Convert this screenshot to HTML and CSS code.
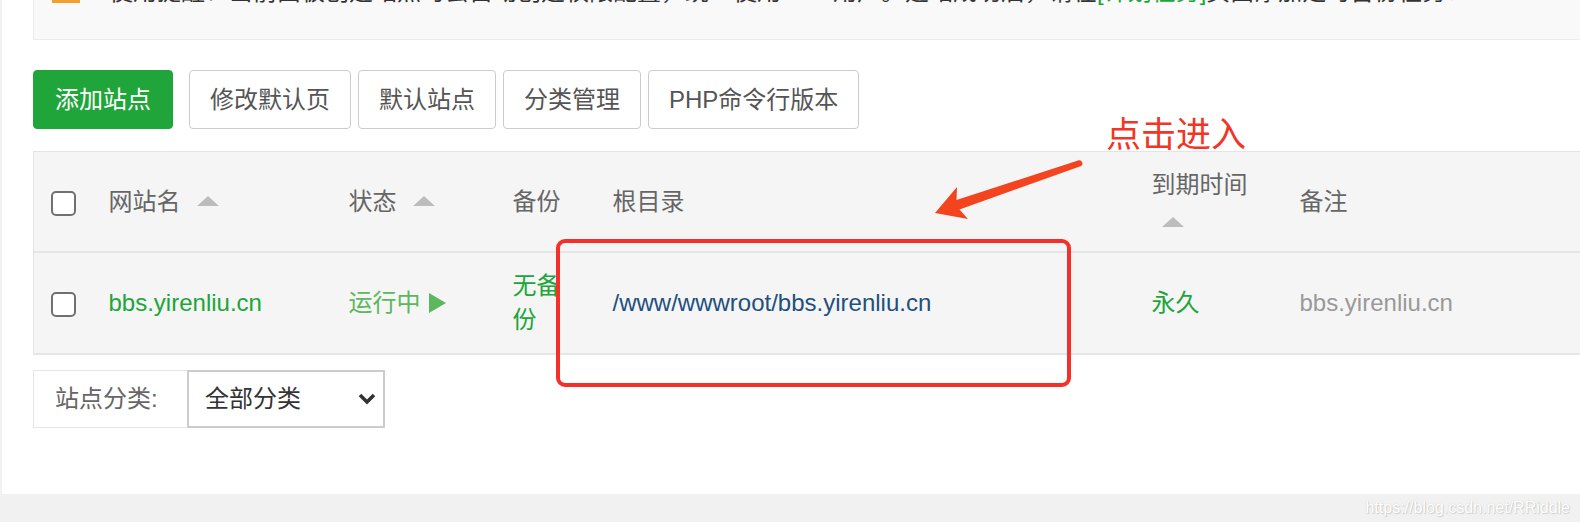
FILE: index.html
```html
<!DOCTYPE html>
<html lang="zh-CN">
<head>
<meta charset="utf-8">
<title>网站</title>
<link rel="stylesheet" href="styles.css">
</head>
<body>
<div class="panel">
  <div class="notice">
    <span class="notice-icon"></span>
    <span class="notice-text">使用提醒：当前面板创建站点时会自动创建权限配置，统一使用www用户。建站成功后，请在<span class="green">[计划任务]</span>页面添加定时备份任务！</span>
  </div>

  <div class="toolbar">
    <button class="btn btn-green">添加站点</button>
    <button class="btn">修改默认页</button>
    <button class="btn">默认站点</button>
    <button class="btn">分类管理</button>
    <button class="btn">PHP命令行版本</button>
  </div>

  <table class="sites">
    <colgroup>
      <col class="c-cb"><col class="c-name"><col class="c-status"><col class="c-backup"><col class="c-root"><col class="c-exp"><col>
    </colgroup>
    <thead>
      <tr>
        <th><span class="cb"></span></th>
        <th>网站名 <span class="sort"></span></th>
        <th>状态 <span class="sort"></span></th>
        <th>备份</th>
        <th>根目录</th>
        <th class="exp">到期时间 <span class="sort"></span></th>
        <th>备注</th>
      </tr>
    </thead>
    <tbody>
      <tr>
        <td><span class="cb"></span></td>
        <td class="green">bbs.yirenliu.cn</td>
        <td class="run">运行中 <span class="play"></span></td>
        <td class="green">无备份</td>
        <td class="path">/www/wwwroot/bbs.yirenliu.cn</td>
        <td class="green">永久</td>
        <td class="remark">bbs.yirenliu.cn</td>
      </tr>
    </tbody>
  </table>

  <div class="filter">
    <span class="filter-label">站点分类:</span>
    <span class="filter-select">全部分类
      <svg class="chev" width="18" height="12" viewBox="0 0 18 12"><path d="M2 2 L9 9 L16 2" fill="none" stroke="#333" stroke-width="3.6"/></svg>
    </span>
  </div>

  <div class="red-box"></div>
  <svg class="arrow" width="170" height="80" viewBox="0 0 170 80">
    <path d="M15 63 L37 37 L36.5 50 L158.8 10.3 A3.2 3.2 0 0 1 161.2 16 L39.5 59.5 L48 69 Z" fill="#f4441f"/>
  </svg>
  <div class="callout">点击进入</div>
</div>
<div class="watermark">https://blog.csdn.net/RRiddle</div>
</body>
</html>
```

FILE: styles.css
```css
html, body {
  margin: 0;
  padding: 0;
}
body {
  background: #f1f1f1;
  font-family: "Liberation Sans", "Noto Sans CJK SC", sans-serif;
  font-size: 24px;
  line-height: 34px;
  color: #555;
  width: 1580px;
  height: 522px;
  overflow: hidden;
  position: relative;
}
.panel {
  position: relative;
  margin-left: 2px;
  height: 494px;
  background: #fff;
  padding-left: 31px;
  overflow: hidden;
  box-sizing: border-box;
}
.notice {
  margin-top: -40px;
  padding: 15px 0 30px 18px;
  background: #f9f9f9;
  border: 1px solid #ececec;
  border-right: none;
  border-top: none;
  display: flex;
  align-items: center;
  white-space: nowrap;
  color: #333;
}
.notice-icon {
  display: inline-block;
  width: 28px;
  height: 20px;
  background: #f0a030;
  margin-right: 29px;
  flex: none;
  position: relative;
  top: 1px;
}
.green { color: #20a53a; }

.toolbar {
  margin-top: 30px;
  display: flex;
  gap: 7px;
}
.btn {
  height: 59px;
  box-sizing: border-box;
  padding: 0 20px;
  border: 1px solid #ccc;
  border-radius: 4px;
  background: #fff;
  color: #555;
  font: inherit;
  line-height: 34px;
}
.btn-green {
  background: #20a53a;
  border-color: #20a53a;
  color: #fff;
  padding: 0 21px;
  margin-right: 9px;
}

.sites {
  margin-top: 22px;
  width: 1547px;
  border-collapse: collapse;
  table-layout: fixed;
  background: #f5f5f5;
  border-top: 1px solid #e4e4e4;
  border-left: 1px solid #e4e4e4;
}
.c-cb { width: 58px; }
.c-name { width: 240px; }
.c-status { width: 164px; }
.c-backup { width: 100px; }
.c-root { width: 539px; }
.c-exp { width: 148px; }
.sites th, .sites td {
  padding: 0 0 0 17px;
  text-align: left;
  font-weight: normal;
  vertical-align: middle;
  border-bottom: 2px solid #e6e6e6;
}
.sites th {
  height: 99px;
  color: #666;
}
.sites th.exp { padding-right: 17px; }
.sites td {
  height: 100px;
  padding-right: 17px;
}
.sites td:first-child, .sites th:first-child { padding-right: 0; }
.cb {
  display: inline-block;
  width: 25px;
  height: 25px;
  box-sizing: border-box;
  border: 2px solid #707070;
  border-radius: 5px;
  background: #fff;
  vertical-align: middle;
}
.sort {
  display: inline-block;
  margin-left: 10px;
  width: 0;
  height: 0;
  border-left: 11px solid transparent;
  border-right: 11px solid transparent;
  border-bottom: 10px solid #bdbdbd;
  vertical-align: middle;
  position: relative;
  top: -2px;
}
.exp .sort { top: 2px; }
.run { color: #5cb85c; }
.play {
  display: inline-block;
  width: 0;
  height: 0;
  margin-left: 2px;
  border-top: 10px solid transparent;
  border-bottom: 10px solid transparent;
  border-left: 17px solid #5cb85c;
  vertical-align: middle;
  position: relative;
  top: -2px;
}
.path { color: #22507e; }
.remark { color: #999; }

.filter {
  margin-top: 15px;
  display: flex;
  height: 58px;
}
.filter-label {
  width: 154px;
  box-sizing: border-box;
  border: 1px solid #e6e6e6;
  border-right: none;
  padding-left: 21px;
  display: flex;
  align-items: center;
  color: #666;
}
.filter-select {
  width: 198px;
  box-sizing: border-box;
  border: 2px solid #ccc;
  padding: 0 7px 0 16px;
  display: flex;
  align-items: center;
  justify-content: space-between;
  color: #333;
}

.red-box {
  position: absolute;
  left: 554px;
  top: 239px;
  width: 515px;
  height: 148px;
  box-sizing: border-box;
  border: 4px solid #f5302a;
  border-radius: 9px;
}
.arrow {
  position: absolute;
  left: 918px;
  top: 150px;
}
.callout {
  position: absolute;
  left: 1104px;
  top: 110px;
  font-size: 35px;
  line-height: 44px;
  color: #ef3627;
  font-family: "Noto Sans CJK SC", sans-serif;
}
.watermark {
  position: absolute;
  right: 10px;
  bottom: 4px;
  font-size: 16px;
  line-height: 20px;
  color: #fff;
  text-shadow: 0 0 1px #c8c8c8, 1px 1px 1px #d0d0d0;
}
```
